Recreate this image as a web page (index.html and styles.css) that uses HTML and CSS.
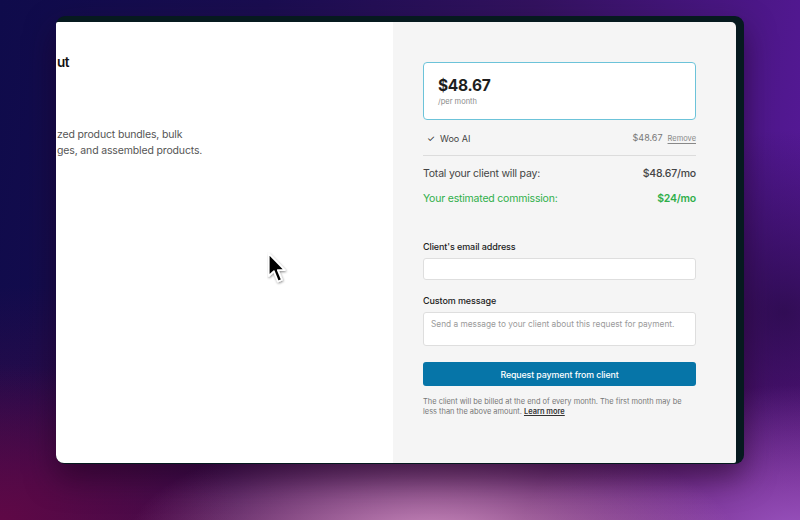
FILE: index.html
```html
<!DOCTYPE html>
<html>
<head>
<meta charset="utf-8">
<link rel="stylesheet" href="styles.css">
</head>
<body>
<div class="stage">
  <div class="frame">
    <div class="window">
      <section class="left">
        <h2 class="title">ut</h2>
        <p class="desc">zed product bundles, bulk<br>ges, and assembled products.</p>
      </section>
      <section class="right">
        <div class="price-card">
          <div class="price">$48.67</div>
          <div class="per">/per month</div>
        </div>
        <div class="item-row">
          <span class="item-name"><span class="check">✓</span>Woo AI</span>
          <span class="item-meta"><span class="item-price">$48.67</span><a class="remove">Remove</a></span>
        </div>
        <div class="sum-row">
          <span>Total your client will pay:</span>
          <span class="sum-val">$48.67/mo</span>
        </div>
        <div class="sum-row green">
          <span>Your estimated commission:</span>
          <span class="sum-val">$24/mo</span>
        </div>
        <label class="field-label">Client's email address</label>
        <div class="input"></div>
        <label class="field-label second">Custom message</label>
        <div class="textarea">Send a message to your client about this request for payment.</div>
        <button class="btn">Request payment from client</button>
        <p class="note">The client will be billed at the end of every month. The first month may be less than the above amount. <a class="learn">Learn more</a></p>
      </section>
    </div>
  </div>
  <svg class="cursor" width="22" height="36" viewBox="0 0 20 33">
    <defs>
      <filter id="sh" x="-50%" y="-50%" width="200%" height="200%">
        <feDropShadow dx="0.5" dy="1" stdDeviation="1.2" flood-color="#000" flood-opacity="0.45"/>
      </filter>
    </defs>
    <path d="M1.5 1.5 L1.5 22 L6.3 17.6 L10 27 L13.6 25.5 L9.8 16.6 L16.2 16.6 Z" fill="#000" stroke="#fff" stroke-width="1.6" stroke-linejoin="round" filter="url(#sh)"/>
  </svg>
</div>
</body>
</html>
```

FILE: styles.css
```css
html, body {
  margin: 0;
  padding: 0;
  width: 800px;
  height: 520px;
  overflow: hidden;
}

body {
  font-family: Inter, "Noto Sans", sans-serif;
  background:
    radial-gradient(ellipse 38% 22% at 54% 104%, rgba(214, 150, 200, 0.95), rgba(214, 150, 200, 0) 100%),
    radial-gradient(ellipse 35% 30% at 100% 104%, rgba(160, 90, 200, 0.95), rgba(160, 90, 200, 0) 100%),
    radial-gradient(ellipse 30% 30% at 0% 100%, rgba(95, 8, 70, 1), rgba(95, 8, 70, 0) 100%),
    radial-gradient(ellipse 25% 35% at 98% 60%, rgba(40, 10, 70, 0.8), rgba(40, 10, 70, 0) 100%),
    linear-gradient(180deg, rgba(0,0,0,0) 55%, rgba(90, 10, 70, 0.6) 100%),
    linear-gradient(100deg, #0f0b4b 0%, #1a0d50 30%, #33125f 60%, #5b1aa0 100%);
}

.stage {
  position: relative;
  width: 800px;
  height: 520px;
  padding: 16px 0 0 56px;
  box-sizing: border-box;
}

.frame {
  width: 688px;
  height: 448px;
  background: #061a1f;
  border-radius: 9px;
  padding: 6px 8px 1px 0;
  box-sizing: border-box;
  box-shadow: 0 14px 30px rgba(30, 0, 30, 0.55);
}

.window {
  display: grid;
  grid-template-columns: 337px 343px;
  height: 441px;
  border-radius: 2px 5px 2px 8px;
  overflow: hidden;
}

.left {
  background: #ffffff;
  padding: 31px 0 0 1px;
}

.title {
  margin: 0;
  font-size: 13.5px;
  line-height: 18px;
  font-weight: 600;
  color: #111;
  letter-spacing: -0.4px;
}

.desc {
  margin: 56px 0 0;
  font-size: 10.5px;
  line-height: 16px;
  color: #555;
  letter-spacing: -0.15px;
}

.right {
  background: #f5f5f5;
  padding: 40px 40px 0 30px;
  display: flex;
  flex-direction: column;
}

.price-card {
  height: 58px;
  box-sizing: border-box;
  border: 1px solid #6cc3d9;
  border-radius: 4px;
  background: #fff;
  padding: 13px 14px 0;
}

.price {
  font-size: 15.5px;
  line-height: 20px;
  font-weight: 700;
  color: #1e1e1e;
  letter-spacing: -0.3px;
}

.per {
  margin-top: 1px;
  font-size: 7.5px;
  line-height: 10px;
  color: #8a8a8a;
}

.item-row {
  display: flex;
  justify-content: space-between;
  align-items: center;
  margin-top: 12px;
  padding-bottom: 10px;
  border-bottom: 1px solid #dcdcdc;
  font-size: 9px;
  line-height: 12px;
  color: #444;
}

.check {
  display: inline-block;
  width: 13px;
  padding-left: 4px;
  color: #222;
  font-size: 9px;
}

.item-price {
  color: #777;
}

.remove {
  margin-left: 5px;
  font-size: 7.5px;
  color: #888;
  text-decoration: underline;
  text-underline-offset: 1.5px;
}

.sum-row {
  display: flex;
  justify-content: space-between;
  margin-top: 11px;
  font-size: 10.5px;
  line-height: 14px;
  color: #444;
  letter-spacing: -0.2px;
}

.sum-row + .sum-row {
  margin-top: 11px;
}

.sum-val {
  font-weight: 500;
}

.green {
  color: #2faf4a;
}

.green .sum-val {
  font-weight: 600;
}

.field-label {
  display: block;
  margin-top: 35px;
  font-size: 9px;
  line-height: 12px;
  font-weight: 500;
  color: #222;
  letter-spacing: -0.1px;
}

.field-label.second {
  margin-top: 15px;
}

.input {
  margin-top: 5px;
  height: 22px;
  box-sizing: border-box;
  background: #fff;
  border: 1px solid #dedede;
  border-radius: 3px;
}

.textarea {
  margin-top: 5px;
  height: 34px;
  box-sizing: border-box;
  background: #fff;
  border: 1px solid #dedede;
  border-radius: 3px;
  padding: 5px 7px 0;
  font-size: 8.3px;
  line-height: 12px;
  color: #9a9a9a;
}

.btn {
  margin-top: 16px;
  height: 24px;
  border: none;
  border-radius: 3px;
  background: #0675a8;
  color: #fff;
  font-family: inherit;
  font-size: 8.8px;
  font-weight: 500;
  letter-spacing: -0.1px;
  padding: 0;
}

.note {
  margin: 11px 0 0;
  font-size: 7.45px;
  line-height: 10px;
  color: #777;
  padding-right: 2px;
}

.learn {
  color: #333;
  font-weight: 600;
  text-decoration: underline;
  text-underline-offset: 1px;
}

.cursor {
  position: absolute;
  left: 267px;
  top: 252px;
}
```
